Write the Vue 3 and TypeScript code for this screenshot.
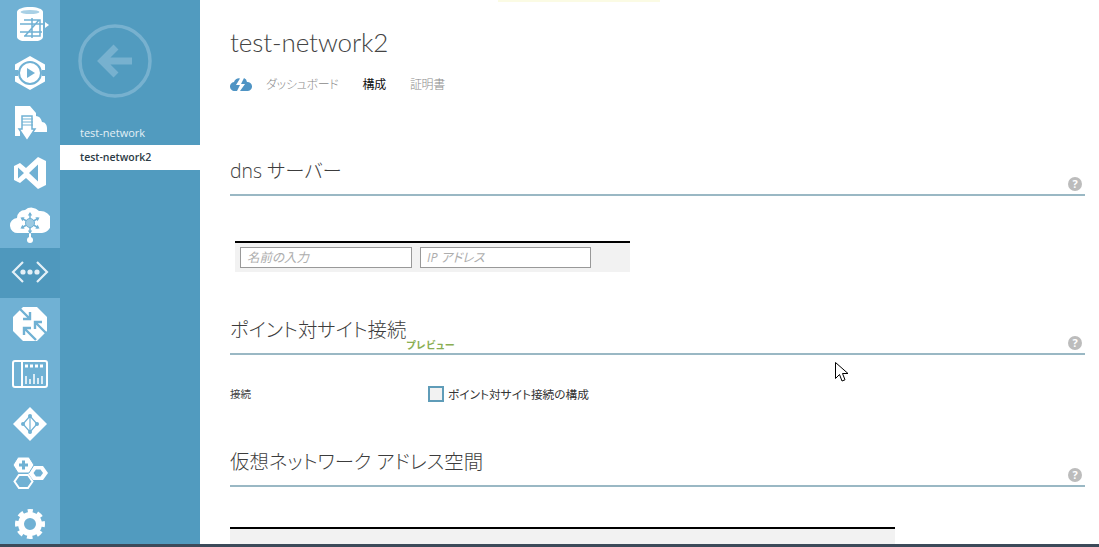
<script setup lang="ts">
const tabs = [
  { label: 'ダッシュボード', active: false },
  { label: '構成', active: true },
  { label: '証明書', active: false }
]
const networks = [
  { name: 'test-network', active: false },
  { name: 'test-network2', active: true }
]
const spokes = [0, 60, 120, 180, 240, 300]
</script>

<template>
  <div class="page">
    <div class="shell">
      <nav class="rail">
        <div class="rail-item">
          <svg viewBox="-1 0 38 36" width="38" height="36">
            <path d="M5 7c0-3 6-5 13-5s13 2 13 5v25c0 3-6 5-13 5S5 35 5 32z" fill="#fff" />
            <ellipse cx="18" cy="7" rx="9.500" ry="2" fill="#a9d0e5" />
            <path d="M8 19h26M8 27h22M12 15h16v16H12M20 13v20M27 15L13 31" stroke="#70b1d4" stroke-width="1.500" fill="none" />
            <path d="M33 17l4 3-4 3z" fill="#fff" />
          </svg>
        </div>
        <div class="rail-item">
          <svg viewBox="0 0 36 36" width="36" height="36">
            <path d="M18 1l15 8.500v17L18 35 3 26.500v-17z" fill="#fff" />
            <circle cx="18" cy="18" r="11" fill="none" stroke="#70b1d4" stroke-width="2" />
            <rect x="1" y="15" width="5" height="6" fill="#70b1d4" />
            <rect x="30" y="15" width="5" height="6" fill="#70b1d4" />
            <circle cx="18" cy="18" r="8.500" fill="#fff" />
            <path d="M15 13l8 5-8 5z" fill="#70b1d4" />
          </svg>
        </div>
        <div class="rail-item">
          <svg viewBox="0 0 36 38" width="36" height="38">
            <path d="M3 2h15l6 7v3c3 0 5 2 6 6 3 0 5 3 5 6v4H20v-4h-9v4H8v4H3z" fill="#fff" />
            <path d="M10 12h10v13h3l-8 12-8-12h3z" fill="#fff" stroke="#70b1d4" stroke-width="1.500" />
            <path d="M10 15h11M10 18h11M10 21h11" stroke="#70b1d4" stroke-width="1.200" />
          </svg>
        </div>
        <div class="rail-item">
          <svg viewBox="0 0 32 32" width="32" height="32">
            <path fill-rule="evenodd" fill="#fff" d="M24 0l8 4v24l-8 4-12-11-6 5-6-3V9l6-3 6 5zM4 10.500v11l6-5.500zM24 7.500L15 16l9 8.500z" />
          </svg>
        </div>
        <div class="rail-item">
          <svg viewBox="0 0 40 40" width="40" height="40">
            <path d="M8 30a7.500 7.500 0 0 1-1-15 8 8 0 0 1 8-8 10 10 0 0 1 14 1 8 8 0 0 1 3 22z" fill="#fff" />
            <path d="M20 29v8" stroke="#fff" stroke-width="2" />
            <circle cx="20" cy="37" r="3" fill="#fff" />
            <g v-for="a in spokes" :key="a" :transform="`rotate(${a} 20 20)`">
              <path d="M20 20v-9.500" stroke="#70b1d4" stroke-width="1.500" />
              <path d="M17.800 12.500l2.200-3.500 2.200 3.500z" fill="#70b1d4" />
            </g>
            <circle cx="20" cy="20" r="4.500" fill="#9ccae2" stroke="#70b1d4" stroke-width="1" />
          </svg>
        </div>
        <div class="rail-item rail-active">
          <svg viewBox="0 0 38 22" width="38" height="22">
            <path d="M12 1L2 11l10 10M26 1l10 10-10 10" fill="none" stroke="#e4f0f7" stroke-width="2.200" />
            <circle cx="12" cy="11" r="2.600" fill="#e4f0f7" />
            <circle cx="19" cy="11" r="2.600" fill="#e4f0f7" />
            <circle cx="26" cy="11" r="2.600" fill="#e4f0f7" />
          </svg>
        </div>
        <div class="rail-item">
          <svg viewBox="0 0 36 36" width="36" height="36">
            <path d="M11 1h14l10 10v14L25 35H11L1 25V11z" fill="#fff" />
            <path d="M7 2l11 11M18 6v7h-7M34 27L23 16M23 23v-7h7M24 34L12 22M12 29v-7h7" fill="none" stroke="#70b1d4" stroke-width="2.400" />
          </svg>
        </div>
        <div class="rail-item">
          <svg viewBox="0 0 36 28" width="36" height="28">
            <rect x="1" y="1" width="34" height="26" rx="2" fill="#70b1d4" stroke="#fff" stroke-width="2" />
            <path d="M10 2v24" stroke="#fff" stroke-width="2" />
            <path d="M13 6h19" stroke="#fff" stroke-width="3" stroke-dasharray="3 2" />
            <path d="M14 24v-8M18 24v-5M22 24v-10M26 24v-6M30 24v-8" stroke="#fff" stroke-width="1.500" />
          </svg>
        </div>
        <div class="rail-item">
          <svg viewBox="0 0 34 34" width="34" height="34">
            <path d="M17 0l17 17-17 17L0 17z" fill="#fff" />
            <path d="M17 9l-7 8 7 8 7-8zM17 9v16" fill="none" stroke="#70b1d4" stroke-width="1.200" />
            <circle cx="17" cy="9" r="2" fill="#70b1d4" />
            <circle cx="10" cy="17" r="2" fill="#70b1d4" />
            <circle cx="17" cy="25" r="2" fill="#70b1d4" />
            <circle cx="24" cy="17" r="2" fill="#70b1d4" />
          </svg>
        </div>
        <div class="rail-item">
          <svg viewBox="0 0 36 34" width="36" height="34">
            <path d="M21 9h10l5 7-5 7H21l-5-7z" fill="#fff" />
            <path d="M24 12.500h4.500l2.500 3.500-2.500 3.500H24L21.500 16z" fill="#70b1d4" />
            <path d="M7 18h9l4.500 6.500L16 31H7l-4.500-6.500z" fill="#70b1d4" stroke="#fff" stroke-width="2" />
            <path d="M6 0h11l5 8-5 8H6L1 8z" fill="#fff" stroke="#70b1d4" stroke-width="1" />
            <path d="M11.500 3.500v9M7 8h9" stroke="#70b1d4" stroke-width="3" />
          </svg>
        </div>
        <div class="rail-item">
          <svg viewBox="0 0 30 30" width="30" height="30">
            <circle cx="15" cy="15" r="9" fill="none" stroke="#fff" stroke-width="6" />
            <circle cx="15" cy="15" r="13" fill="none" stroke="#fff" stroke-width="4" stroke-dasharray="5.600 4.610" stroke-dashoffset="2.800" transform="rotate(-90 15 15)" />
          </svg>
        </div>
      </nav>

      <aside class="side">
        <div class="back">
          <svg viewBox="0 0 74 74" width="74" height="74">
            <circle cx="37" cy="37" r="35" fill="none" stroke="#77b1cf" stroke-width="3.500" />
            <path d="M54 37H24M38 23L24 37l14 14" fill="none" stroke="#77b1cf" stroke-width="7" />
          </svg>
        </div>
        <ul class="net-list">
          <li v-for="n in networks" :key="n.name" class="net" :class="{ 'net-active': n.active }">{{ n.name }}</li>
        </ul>
      </aside>

      <main class="main">
        <div class="notice"></div>
        <h1 class="title">test-network2</h1>
        <div class="tabs">
          <svg class="tab-icon" viewBox="0 0 22 14" width="22" height="14">
            <path d="M5 14a4.500 4.500 0 0 1-1-9 5 5 0 0 1 6-3.500L6 8h4l-3 6zM10 14l5-7h-4l3-6a5 5 0 0 1 3 4 4.500 4.500 0 0 1 1 9z" fill="#4f94c4" />
          </svg>
          <span v-for="t in tabs" :key="t.label" class="tab" :class="{ 'tab-active': t.active }">{{ t.label }}</span>
        </div>

        <section class="section sec-dns">
          <div class="sec-head">
            <h2 class="sec-title">dns サーバー</h2>
            <span class="help">?</span>
          </div>
          <div class="dns-table">
            <div class="fake-input in-name">名前の入力</div>
            <div class="fake-input in-ip">IP アドレス</div>
          </div>
        </section>

        <section class="section sec-p2s">
          <div class="sec-head">
            <h2 class="sec-title">ポイント対サイト接続<span class="preview">プレビュー</span></h2>
            <span class="help">?</span>
          </div>
          <div class="row">
            <span class="row-label">接続</span>
            <span class="check"></span>
            <span class="check-label">ポイント対サイト接続の構成</span>
          </div>
        </section>

        <section class="section sec-addr">
          <div class="sec-head">
            <h2 class="sec-title">仮想ネットワーク アドレス空間</h2>
            <span class="help">?</span>
          </div>
          <div class="addr-table"></div>
        </section>

        <svg class="cursor" viewBox="0 0 13 21" width="13" height="21">
          <path d="M.5.5v16l4-4 2.500 6.500 3-1.200-2.500-6.300h5.500z" fill="#fff" stroke="#000" stroke-width="1" />
        </svg>
      </main>
    </div>
    <div class="bottom-bar"></div>
  </div>
</template>

<style>
html, body {
  margin: 0;
  overflow: hidden;
}
</style>

<style scoped>
.page {
  width: 1099px;
  height: 547px;
  display: flex;
  flex-direction: column;
  overflow: hidden;
  background: #fff;
  font-family: "Open Sans", "Noto Sans CJK JP", sans-serif;
  font-feature-settings: "palt";
}
.shell {
  flex: 1;
  min-height: 0;
  display: flex;
}
.bottom-bar {
  height: 3px;
  background: #3c4a59;
}
.rail {
  width: 60px;
  flex: none;
  background: #70b1d4;
  overflow: hidden;
}
.rail-item {
  height: 50px;
  display: flex;
  align-items: center;
  justify-content: center;
}
.rail-item:first-child {
  margin-top: -2px;
}
.rail-item:nth-child(6) {
  margin-bottom: 1px;
}
.rail-active {
  box-sizing: border-box;
  padding-bottom: 2px;
  background: #4f98bd;
}
.side {
  width: 140px;
  flex: none;
  background: #519bbf;
  box-sizing: border-box;
  padding-top: 24px;
}
.back {
  height: 74px;
  padding-left: 18px;
}
.net-list {
  list-style: none;
  margin: 22px 0 0;
  padding: 0;
}
.net {
  height: 25px;
  line-height: 25px;
  padding-left: 20px;
  font-size: 11px;
  color: #e4f0f6;
}
.net-active {
  background: #fff;
  color: #2b3a45;
  font-size: 10.5px;
  font-weight: 600;
}
.main {
  flex: 1;
  min-width: 0;
  position: relative;
  padding: 0 14px 0 30px;
  overflow: hidden;
}
.notice {
  position: absolute;
  left: 298px;
  top: 0;
  width: 162px;
  height: 2px;
  background: #fbfbe4;
}
.title {
  margin: 24px 0 0;
  font-family: Lato, "Noto Sans CJK JP", sans-serif;
  font-size: 26px;
  letter-spacing: -.1px;
  line-height: 36px;
  font-weight: 300;
  color: #444;
}
.tabs {
  display: flex;
  align-items: center;
  height: 22px;
  margin-top: 13px;
}
.tab-icon {
  margin-right: 14px;
}
.tab {
  font-size: 12px;
  letter-spacing: -.3px;
  color: #8a8a8a;
  margin-right: 24px;
  font-weight: 300;
}
.tab-active {
  color: #111;
  font-weight: 400;
}
.sec-head {
  height: 38px;
  box-sizing: border-box;
  border-bottom: 2px solid #9ab8c4;
  display: flex;
  justify-content: space-between;
  align-items: flex-end;
}
.sec-title {
  margin: 0 0 10px;
  font-size: 19.4px;
  line-height: 26px;
  font-weight: 300;
  color: #3c3c3c;
  position: relative;
  align-self: flex-start;
}
.preview {
  position: absolute;
  left: 100%;
  top: 22px;
  font-size: 10px;
  letter-spacing: .6px;
  line-height: 12px;
  font-weight: 700;
  color: #8aae52;
  white-space: nowrap;
}
.help {
  width: 14px;
  height: 14px;
  margin: 0 3px 3px 0;
  border-radius: 50%;
  background: #bcbcbc;
  color: #fff;
  font-size: 11px;
  line-height: 14px;
  font-weight: 700;
  text-align: center;
}
.sec-dns {
  margin-top: 63px;
}
.dns-table {
  width: 395px;
  height: 31px;
  margin: 45px 0 0 5px;
  border-top: 2px solid #000;
  background: #f2f2f2;
  box-sizing: border-box;
  display: flex;
  gap: 8px;
  padding: 4px 0 0 5px;
}
.fake-input {
  height: 21px;
  box-sizing: border-box;
  border: 1px solid #999;
  background: #fff;
  font-size: 12.5px;
  line-height: 20px;
  padding-left: 6px;
  color: #adadad;
  font-style: italic;
}
.in-name {
  width: 172px;
}
.in-ip {
  width: 171px;
}
.sec-p2s {
  margin-top: 45px;
}
.row {
  display: flex;
  align-items: center;
  height: 18px;
  margin-top: 30px;
  font-size: 10.5px;
}
.row-label {
  width: 198px;
  padding-bottom: 2px;
  color: #444;
}
.check {
  width: 16px;
  height: 16px;
  box-sizing: border-box;
  border: 2px solid #5f9cb8;
  background: #f2f2f2;
  margin-right: 4px;
}
.check-label {
  font-size: 11.7px;
  padding-bottom: 2px;
  color: #333;
}
.sec-addr {
  margin-top: 46px;
}
.addr-table {
  width: 665px;
  height: 40px;
  margin-top: 40px;
  border-top: 2px solid #000;
  background: #f2f2f2;
}
.cursor {
  position: absolute;
  left: 635px;
  top: 362px;
}
</style>
